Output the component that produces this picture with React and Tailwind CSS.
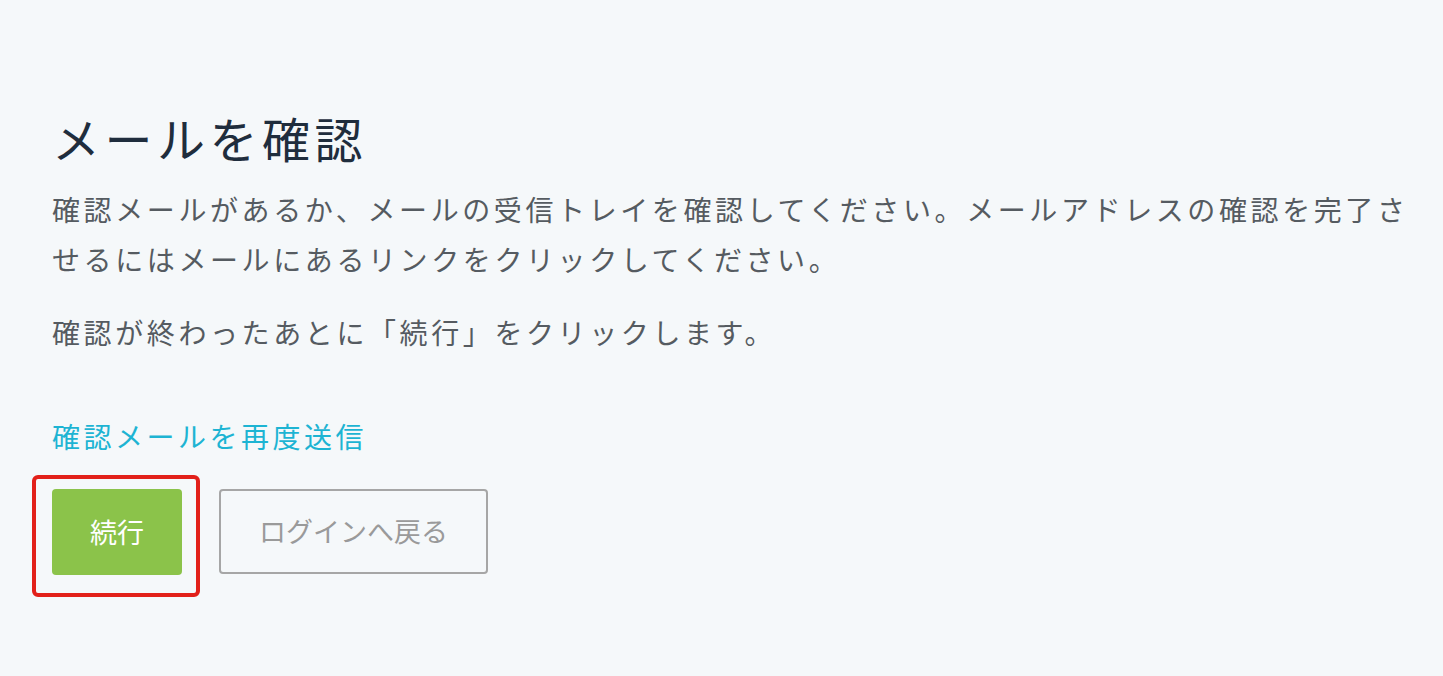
export default function App() {
  const font = { fontFamily: '"Noto Sans CJK JP", "Noto Sans", sans-serif' };
  return (
    <div className="min-h-[676px] w-full bg-[#f5f8fa]" style={font}>
      <div className="pl-[52px] pr-[18px] pt-[107px]">
        <h1 className="text-[48px] leading-[60px] tracking-[4.5px] text-[#1f2d3d] font-normal">メールを確認</h1>
        <p className="mt-[17px] text-[28px] leading-[50px] tracking-[3.6px] text-[#555b61]">
          確認メールがあるか、メールの受信トレイを確認してください。メールアドレスの確認を完了させるにはメールにあるリンクをクリックしてください。
        </p>
        <p className="mt-[23px] text-[28px] leading-[50px] tracking-[3.6px] text-[#555b61]">
          確認が終わったあとに「続行」をクリックします。
        </p>
        <a className="mt-[54px] block text-[28px] leading-[50px] tracking-[3.5px] text-[#1db4d3]">確認メールを再度送信</a>
        <div className="mt-[28px] flex gap-[37px]">
          <div className="relative">
            <button className="flex h-[86px] w-[130px] items-center justify-center rounded-[4px] bg-[#8bc34a] text-[27px] text-white">続行</button>
            <div className="pointer-events-none absolute left-[-20px] top-[-14px] h-[122px] w-[168px] rounded-[6px] border-[4px] border-[#e2201a]"></div>
          </div>
          <button className="flex h-[85px] w-[269px] items-center justify-center rounded-[4px] border-2 border-[#a6a6a6] text-[27px] text-[#9a9a9a]">ログインへ戻る</button>
        </div>
      </div>
    </div>
  );
}
